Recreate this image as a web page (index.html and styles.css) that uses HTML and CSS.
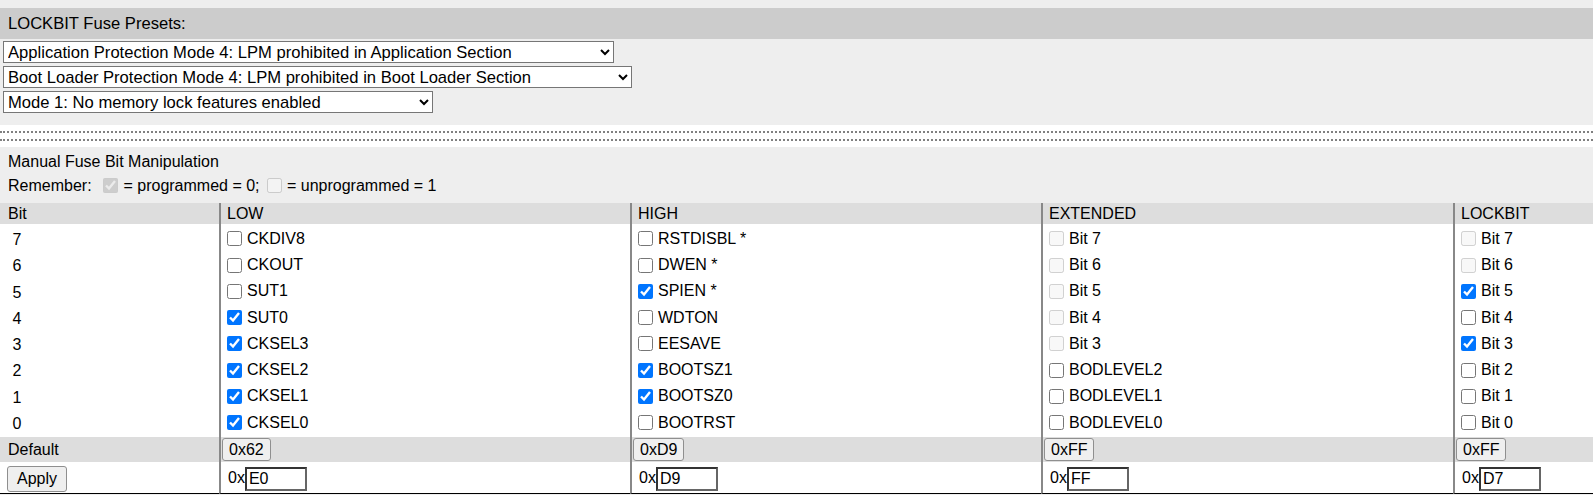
FILE: index.html
```html
<!DOCTYPE html>
<html lang="en">
<head>
    <meta charset="UTF-8">
    <meta name="viewport" content="width=device-width, initial-scale=1.0">
    <title>AVR Fuse Calculator</title>
    <link rel="stylesheet" href="styles.css">
</head>
<body>
    <div class="presets">
        <div class="presets-title">LOCKBIT Fuse Presets:</div>
        <select class="preset-select preset-app">
            <option>Application Protection Mode 4: LPM prohibited in Application Section</option>
        </select>
        <select class="preset-select preset-boot">
            <option>Boot Loader Protection Mode 4: LPM prohibited in Boot Loader Section</option>
        </select>
        <select class="preset-select preset-mode">
            <option>Mode 1: No memory lock features enabled</option>
        </select>
    </div>

    <div class="divider"><div class="divider-lines"></div></div>

    <div class="manual">
        <div class="manual-title">Manual Fuse Bit Manipulation</div>
        <div class="legend">Remember:&nbsp; <input type="checkbox" checked disabled>= programmed = 0; <input type="checkbox" disabled>= unprogrammed = 1</div>

        <table class="fuses">
            <thead>
                <tr>
                    <th class="col-bit">Bit</th>
                    <th class="col-wide">LOW</th>
                    <th class="col-wide">HIGH</th>
                    <th class="col-ext">EXTENDED</th>
                    <th>LOCKBIT</th>
                </tr>
            </thead>
            <tbody>
                <tr class="bit-row first">
                    <td>&nbsp;7</td>
                    <td><label><input type="checkbox" data-fuse="low" data-bit="7">CKDIV8</label></td>
                    <td><label><input type="checkbox" data-fuse="high" data-bit="7">RSTDISBL *</label></td>
                    <td><label><input type="checkbox" data-fuse="ext" data-bit="7" disabled>Bit 7</label></td>
                    <td><label><input type="checkbox" data-fuse="lock" data-bit="7" disabled>Bit 7</label></td>
                </tr>
                <tr class="bit-row">
                    <td>&nbsp;6</td>
                    <td><label><input type="checkbox" data-fuse="low" data-bit="6">CKOUT</label></td>
                    <td><label><input type="checkbox" data-fuse="high" data-bit="6">DWEN *</label></td>
                    <td><label><input type="checkbox" data-fuse="ext" data-bit="6" disabled>Bit 6</label></td>
                    <td><label><input type="checkbox" data-fuse="lock" data-bit="6" disabled>Bit 6</label></td>
                </tr>
                <tr class="bit-row">
                    <td>&nbsp;5</td>
                    <td><label><input type="checkbox" data-fuse="low" data-bit="5">SUT1</label></td>
                    <td><label><input type="checkbox" data-fuse="high" data-bit="5" checked>SPIEN *</label></td>
                    <td><label><input type="checkbox" data-fuse="ext" data-bit="5" disabled>Bit 5</label></td>
                    <td><label><input type="checkbox" data-fuse="lock" data-bit="5" checked>Bit 5</label></td>
                </tr>
                <tr class="bit-row">
                    <td>&nbsp;4</td>
                    <td><label><input type="checkbox" data-fuse="low" data-bit="4" checked>SUT0</label></td>
                    <td><label><input type="checkbox" data-fuse="high" data-bit="4">WDTON</label></td>
                    <td><label><input type="checkbox" data-fuse="ext" data-bit="4" disabled>Bit 4</label></td>
                    <td><label><input type="checkbox" data-fuse="lock" data-bit="4">Bit 4</label></td>
                </tr>
                <tr class="bit-row">
                    <td>&nbsp;3</td>
                    <td><label><input type="checkbox" data-fuse="low" data-bit="3" checked>CKSEL3</label></td>
                    <td><label><input type="checkbox" data-fuse="high" data-bit="3">EESAVE</label></td>
                    <td><label><input type="checkbox" data-fuse="ext" data-bit="3" disabled>Bit 3</label></td>
                    <td><label><input type="checkbox" data-fuse="lock" data-bit="3" checked>Bit 3</label></td>
                </tr>
                <tr class="bit-row">
                    <td>&nbsp;2</td>
                    <td><label><input type="checkbox" data-fuse="low" data-bit="2" checked>CKSEL2</label></td>
                    <td><label><input type="checkbox" data-fuse="high" data-bit="2" checked>BOOTSZ1</label></td>
                    <td><label><input type="checkbox" data-fuse="ext" data-bit="2">BODLEVEL2</label></td>
                    <td><label><input type="checkbox" data-fuse="lock" data-bit="2">Bit 2</label></td>
                </tr>
                <tr class="bit-row">
                    <td>&nbsp;1</td>
                    <td><label><input type="checkbox" data-fuse="low" data-bit="1" checked>CKSEL1</label></td>
                    <td><label><input type="checkbox" data-fuse="high" data-bit="1" checked>BOOTSZ0</label></td>
                    <td><label><input type="checkbox" data-fuse="ext" data-bit="1">BODLEVEL1</label></td>
                    <td><label><input type="checkbox" data-fuse="lock" data-bit="1">Bit 1</label></td>
                </tr>
                <tr class="bit-row">
                    <td>&nbsp;0</td>
                    <td><label><input type="checkbox" data-fuse="low" data-bit="0" checked>CKSEL0</label></td>
                    <td><label><input type="checkbox" data-fuse="high" data-bit="0">BOOTRST</label></td>
                    <td><label><input type="checkbox" data-fuse="ext" data-bit="0">BODLEVEL0</label></td>
                    <td><label><input type="checkbox" data-fuse="lock" data-bit="0">Bit 0</label></td>
                </tr>
                <tr class="default-row">
                    <td>Default</td>
                    <td><button class="btn">0x62</button></td>
                    <td><button class="btn">0xD9</button></td>
                    <td><button class="btn">0xFF</button></td>
                    <td><button class="btn">0xFF</button></td>
                </tr>
                <tr class="apply-row">
                    <td><button class="btn btn-apply">Apply</button></td>
                    <td>0x<input type="text" class="hex" id="hex-low" value="E0"></td>
                    <td>0x<input type="text" class="hex" id="hex-high" value="D9"></td>
                    <td>0x<input type="text" class="hex" id="hex-ext" value="FF"></td>
                    <td>0x<input type="text" class="hex" id="hex-lock" value="D7"></td>
                </tr>
            </tbody>
        </table>
    </div>

    <script>
        // checked = programmed = 0, unchecked = 1
        function updateHex(fuse) {
            let value = 0;
            document.querySelectorAll('input[data-fuse="' + fuse + '"]').forEach(function(cb) {
                if (!cb.checked) {
                    value |= 1 << parseInt(cb.dataset.bit);
                }
            });
            document.getElementById('hex-' + fuse).value = value.toString(16).toUpperCase().padStart(2, '0');
        }

        document.querySelectorAll('input[data-fuse]').forEach(function(cb) {
            cb.addEventListener('change', function() {
                updateHex(cb.dataset.fuse);
            });
        });
    </script>
</body>
</html>
```

FILE: styles.css
```css
html, body {
    margin: 0;
    padding: 0;
    background-color: #eeeeee;
    font-family: "Liberation Sans", Arial, sans-serif;
    font-size: 16px;
    color: #000;
}

/* presets block */
.presets {
    padding-top: 8px;
    padding-bottom: 9px;
    font-size: 16.6px;
}
.presets-title {
    background-color: #cccccc;
    height: 31px;
    line-height: 31px;
    padding: 0 8px;
}
.preset-select {
    display: block;
    height: 22px;
    margin: 2px 0 3px 3px;
    padding: 0;
    font-family: inherit;
    font-size: 16.6px;
    color: #000;
    background-color: #fff;
    border: 1px solid #767676;
    border-radius: 0;
}
.preset-app {
    width: 611px;
}
.preset-boot {
    width: 629px;
}
.preset-mode {
    width: 430px;
}

/* dotted separator */
.divider {
    background-color: #fff;
    padding: 6px 0;
}
.divider-lines {
    height: 6px;
    border-top: 2px dotted #808080;
    border-bottom: 2px dotted #808080;
}

/* manual fuse bits */
.manual {
    padding-top: 3px;
}
.manual-title {
    padding: 0 8px;
    line-height: 24px;
}
.legend {
    padding: 0 8px;
    height: 24px;
    line-height: 24px;
}
.legend input {
    width: 15px;
    height: 15px;
    margin: 0 5px 0 3px;
    vertical-align: -2px;
}

.fuses {
    width: 100%;
    margin-top: 5px;
    border-collapse: separate;
    border-spacing: 0;
    table-layout: fixed;
}
.fuses th,
.fuses td {
    box-sizing: border-box;
    padding: 0 6px;
    text-align: left;
    white-space: nowrap;
}
.fuses th + th,
.fuses td + td {
    border-left: 2px solid #888888;
}
.fuses th {
    background-color: #dddddd;
    font-weight: normal;
    height: 21px;
}
.fuses th:first-child,
.fuses td:first-child {
    padding-left: 8px;
}
.col-bit {
    width: 219px;
}
.col-wide {
    width: 411px;
}
.col-ext {
    width: 412px;
}

.bit-row td {
    background-color: #fff;
    height: 26.25px;
}
.bit-row.first td {
    height: 29.25px;
    padding-top: 3px;
}
.bit-row label {
    display: inline-flex;
    align-items: center;
}
.bit-row input {
    width: 15px;
    height: 15px;
    margin: 0 5px 0 0;
}

.default-row td {
    background-color: #dddddd;
    height: 25px;
}
.default-row td + td {
    padding-left: 1px;
}

.apply-row td {
    background-color: #fff;
    height: 32px;
    padding-top: 3px;
    border-bottom: 1px solid #000;
}
.apply-row td:first-child {
    padding-left: 7px;
}
.apply-row td + td {
    padding-left: 7px;
}

.btn {
    height: 23px;
    margin: 0;
    padding: 1px 6px;
    font-family: inherit;
    font-size: 16px;
    color: #000;
    background-color: #efefef;
    border: 1px solid #8f8f8f;
    border-radius: 3px;
    cursor: pointer;
}
.btn:hover {
    background-color: #e5e5e5;
}
.btn-apply {
    height: 26px;
    padding: 1px 9px;
}

.hex {
    box-sizing: border-box;
    width: 62px;
    height: 24px;
    margin: 0;
    padding: 0 2px;
    font-family: inherit;
    font-size: 16px;
    vertical-align: middle;
    border: 2px solid #333;
    border-right-color: #666;
    border-bottom-color: #666;
    border-radius: 0;
}
```
